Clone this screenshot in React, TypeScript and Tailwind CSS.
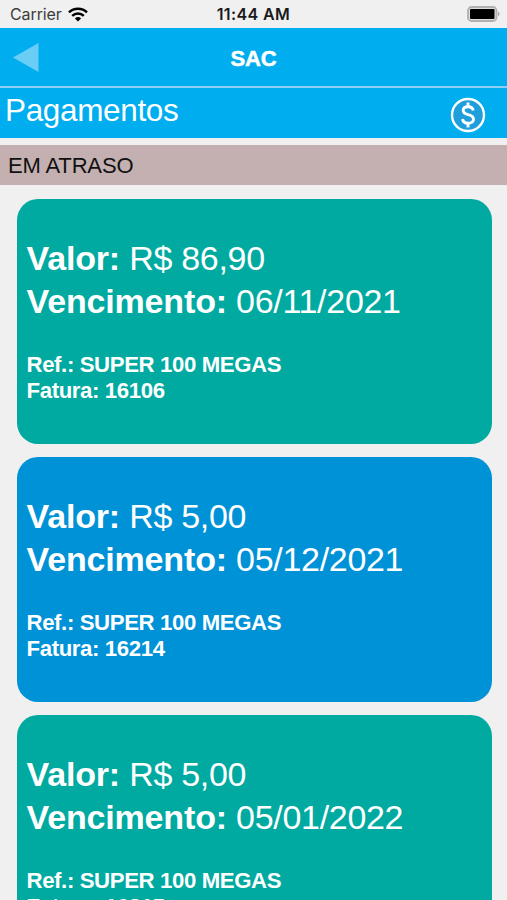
type Bill = {
  value: string;
  dueDate: string;
  plan: string;
  invoice: string;
  className: string;
};

const BILLS: Bill[] = [
  {
    value: "R$ 86,90",
    dueDate: "06/11/2021",
    plan: "SUPER 100 MEGAS",
    invoice: "16106",
    className: "bg-[#00aaa0]",
  },
  {
    value: "R$ 5,00",
    dueDate: "05/12/2021",
    plan: "SUPER 100 MEGAS",
    invoice: "16214",
    className: "bg-[#0092d6]",
  },
  {
    value: "R$ 5,00",
    dueDate: "05/01/2022",
    plan: "SUPER 100 MEGAS",
    invoice: "16315",
    className: "bg-[#00aaa0]",
  },
];

function WifiIcon() {
  return (
    <svg width="20" height="15" viewBox="0 0 20 15" fill="none" stroke="#000" strokeWidth="2.5">
      <path d="M1 5.3C6 .4 14 .4 19 5.3" />
      <path d="M4.2 8.9c3.3-3.2 8.3-3.2 11.6 0" />
      <path d="M10 14.6 6.9 11.4a4.5 4.5 0 0 1 6.2 0Z" fill="#000" stroke="none" />
    </svg>
  );
}

function BatteryIcon() {
  return (
    <svg width="33" height="16" viewBox="0 0 33 16">
      <rect x="1" y="1" width="28.5" height="14" rx="3.6" fill="#ddd" stroke="#b0b0b0" strokeWidth="1.8" />
      <rect x="3" y="3" width="24.5" height="10" rx="1" fill="#000" />
      <path d="M31 5.8c2 .6 2 3.8 0 4.4Z" fill="#aaa" />
    </svg>
  );
}

function StatusBar() {
  return (
    <div className="grid h-7 grid-cols-3 items-center bg-[#f0f0f0] pl-[10px] pr-[7px] font-[Inter,sans-serif] text-[16px]">
      <div className="flex items-center gap-[6px] text-[#3c3c3c]">
        <span className="tracking-[-0.1px]">Carrier</span>
        <WifiIcon />
      </div>
      <span className="pr-[3px] text-center font-semibold tracking-[0.4px] text-[#1a1a1a]">
        11:44 AM
      </span>
      <div className="flex justify-end">
        <BatteryIcon />
      </div>
    </div>
  );
}

function DollarIcon() {
  return (
    <svg width="36" height="36" viewBox="0 0 36 36" fill="none" stroke="#fff">
      <circle cx="18" cy="18" r="16" fill="#1e9fdc" strokeWidth="2.4" />
      <path
        d="M23.2 13.6c-.4-2.4-2.2-3.8-5.1-3.8-3 0-4.9 1.4-4.9 3.7 0 2.5 2 3.4 4.9 4.1 3.1.8 5.4 1.8 5.4 4.6 0 2.5-2.3 4-5.4 4-3.2 0-5.2-1.5-5.5-4.2"
        strokeWidth="2.9"
      />
      <path d="M18 5.6v4M18 26.2v4.2" strokeWidth="2.9" />
    </svg>
  );
}

function BillCard({ bill }: { bill: Bill }) {
  return (
    <article className={`h-[244.5px] rounded-[21px] pl-[10px] pt-[38px] text-white ${bill.className}`}>
      <div className="text-[34px] leading-[43px] tracking-[-0.3px]">
        <p>
          <b className="tracking-[-0.16px]">Valor:</b> {bill.value}
        </p>
        <p>
          <b className="tracking-[-0.16px]">Vencimento:</b> {bill.dueDate}
        </p>
      </div>
      <div className="mt-[29px] text-[22.2px] font-bold leading-[26px] tracking-[-0.38px]">
        <p>Ref.: {bill.plan}</p>
        <p>Fatura: {bill.invoice}</p>
      </div>
    </article>
  );
}

export default function App() {
  return (
    <div className="h-[900px] overflow-hidden bg-[#f0f0f0] font-['Liberation_Sans',Arial,sans-serif]">
      <StatusBar />
      <header className="grid h-[60px] grid-cols-3 items-center border-b-2 border-[#8fcef5] bg-[#00adef] pl-[13px] pr-[13px]">
        <svg width="26" height="29" viewBox="0 0 26 29">
          <path d="M0 14.5 25.5 0v29Z" fill="#6acdf5" />
        </svg>
        <h1 className="pt-[2px] text-center text-[22px] font-bold tracking-[-0.2px] text-white [-webkit-text-stroke:0.5px_white]">
          SAC
        </h1>
      </header>
      <div className="flex h-[50px] items-start justify-between bg-[#00adef] pl-[5px] pr-[21px]">
        <h2 className="text-[31.5px] leading-[45px] tracking-[-0.35px] text-white">Pagamentos</h2>
        <div className="pt-[9px]">
          <DollarIcon />
        </div>
      </div>
      <div className="mt-[7px] h-10 bg-[#c4b0b0] pl-[8px] text-[22px] leading-[42px] tracking-[-0.15px] text-[#111]">
        EM ATRASO
      </div>
      <main className="flex flex-col gap-[13.5px] pl-[16.5px] pr-[15px] pt-[14px]">
        {BILLS.map((bill) => (
          <BillCard key={bill.invoice} bill={bill} />
        ))}
      </main>
    </div>
  );
}
